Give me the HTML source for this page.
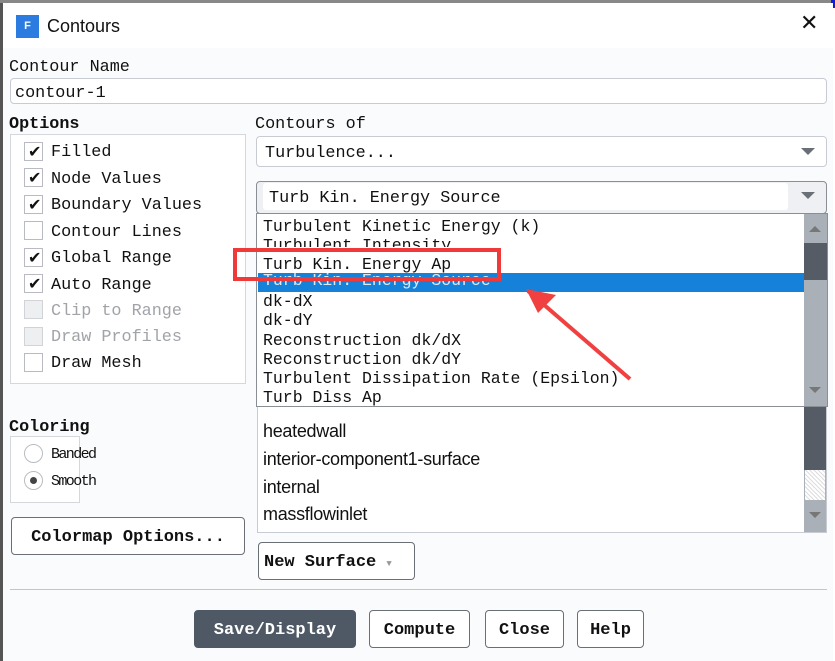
<!DOCTYPE html>
<html><head><meta charset="utf-8"><style>
*{box-sizing:border-box;margin:0;padding:0}
body{width:835px;height:661px;overflow:hidden;background:#fff;font-family:"Liberation Mono","Noto Sans CJK SC",monospace;font-size:16.8px;line-height:23px;color:#111;position:relative}
.a{position:absolute;white-space:pre}
.b{font-weight:bold}
.box{position:absolute;border:1px solid #c8ccd2;border-radius:4px;background:#fff}
.cb{position:absolute;left:24px;width:19px;height:19px;border:1px solid #b8bcc2;background:#fff;line-height:19px}
.cb.d{background:#eeeff1;border-color:#d0d3d8}
.ck{position:absolute;left:3px;top:-1px;font-size:16px;font-family:"DejaVu Sans",sans-serif;font-weight:bold}
.lbl{position:absolute;left:51px}
.g{color:#a0a3a8}
.btn{position:absolute;border:1px solid #6a6e75;border-radius:4px;background:#fff;text-align:center;font-weight:bold;font-size:17px}
.li{position:absolute;left:263px;font-size:16.5px;line-height:19px}
.sf{position:absolute;left:263px;font-family:"Liberation Sans",sans-serif;font-size:18px;letter-spacing:-0.3px}
</style></head><body>
<div class="a" style="left:0;top:0;width:3px;height:661px;background:#555"></div>
<div class="a" style="left:0;top:0;width:835px;height:3px;background:#888"></div>
<div class="a" style="left:831px;top:0;width:4px;height:8px;background:#1020d0"></div>
<div class="a" style="left:3px;top:3px;width:830px;height:45px;background:#fff"></div>
<div class="a" style="left:3px;top:48px;width:830px;height:613px;background:#fafbfc"></div>
<div class="a" style="left:16px;top:15px;width:23px;height:23px;background:#2b7be0;color:#fff;font:bold 11px 'Liberation Sans',sans-serif;text-align:center;line-height:23px">F</div>
<div class="a" style="left:47px;top:15px;font-family:'Liberation Sans',sans-serif;font-size:18px">Contours</div>
<div class="a" style="left:800px;top:12px;font-family:'DejaVu Sans',sans-serif;font-size:22px;font-weight:300">✕</div>

<div class="a" style="left:9px;top:56px">Contour Name</div>
<div class="box" style="left:10px;top:78px;width:817px;height:26px"></div>
<div class="a" style="left:15px;top:82px">contour-1</div>

<div class="a b" style="left:9px;top:113px">Options</div>
<div class="box" style="left:10px;top:134px;width:236px;height:250px;border-radius:0;border-color:#d4d8dd"></div>
<div class="cb" style="top:142px"><span class="ck">✔</span></div><div class="a lbl" style="top:141px">Filled</div>
<div class="cb" style="top:168px"><span class="ck">✔</span></div><div class="a lbl" style="top:168px">Node Values</div>
<div class="cb" style="top:195px"><span class="ck">✔</span></div><div class="a lbl" style="top:194px">Boundary Values</div>
<div class="cb" style="top:221px"></div><div class="a lbl" style="top:221px">Contour Lines</div>
<div class="cb" style="top:248px"><span class="ck">✔</span></div><div class="a lbl" style="top:247px">Global Range</div>
<div class="cb" style="top:274px"><span class="ck">✔</span></div><div class="a lbl" style="top:274px">Auto Range</div>
<div class="cb d" style="top:300px"></div><div class="a lbl g" style="top:300px">Clip to Range</div>
<div class="cb d" style="top:327px"></div><div class="a lbl g" style="top:326px">Draw Profiles</div>
<div class="cb" style="top:353px"></div><div class="a lbl" style="top:352px">Draw Mesh</div>

<div class="a b" style="left:9px;top:416px">Coloring</div>
<div class="box" style="left:10px;top:436px;width:70px;height:67px;border-radius:0;border-color:#d4d8dd"></div>
<div class="a" style="left:24px;top:444px;width:19px;height:19px;border:1px solid #b8bcc2;border-radius:50%;background:#fff"></div>
<div class="a" style="left:51px;top:443px;font-size:15px;letter-spacing:-1.6px">Banded</div>
<div class="a" style="left:24px;top:471px;width:19px;height:19px;border:1px solid #b8bcc2;border-radius:50%;background:#fff"></div>
<div class="a" style="left:30px;top:477px;width:7px;height:7px;border-radius:50%;background:#444"></div>
<div class="a" style="left:51px;top:470px;font-size:15px;letter-spacing:-1.6px">Smooth</div>
<div class="btn" style="left:11px;top:517px;width:234px;height:38px;line-height:40px">Colormap Options...</div>

<div class="a" style="left:255px;top:113px">Contours of</div>
<div class="box" style="left:256px;top:136px;width:571px;height:31px"></div>
<div class="a" style="left:265px;top:142px">Turbulence...</div>
<div class="a" style="left:801px;top:148px;border-left:7px solid transparent;border-right:7px solid transparent;border-top:7px solid #6a6e75"></div>
<div class="box" style="left:256px;top:181px;width:571px;height:33px;border-color:#8a8f96;background:#eef0f3"></div>
<div class="a" style="left:263px;top:183px;width:525px;height:27px;background:#fff;border-radius:3px"></div>
<div class="a" style="left:269px;top:187px">Turb Kin. Energy Source</div>
<div class="a" style="left:801px;top:192px;border-left:7px solid transparent;border-right:7px solid transparent;border-top:7px solid #6a6e75"></div>

<div class="box" style="left:257px;top:405px;width:570px;height:128px;border-radius:0"></div>
<div class="a" style="left:804px;top:405px;width:22px;height:127px;background:#a9b0b7"></div>
<div class="a" style="left:804px;top:405px;width:22px;height:65px;background:#555c66"></div>
<div class="a" style="left:805px;top:470px;width:20px;height:30px;background:repeating-linear-gradient(45deg,#ddd 0 1px,#fff 1px 3px)"></div>
<div class="a" style="left:809px;top:512px;border-left:6px solid transparent;border-right:6px solid transparent;border-top:6px solid #777"></div>
<div class="sf" style="top:420px">heatedwall</div>
<div class="sf" style="top:448px">interior-component1-surface</div>
<div class="sf" style="top:476px">internal</div>
<div class="sf" style="top:503px">massflowinlet</div>

<div class="a" style="left:256px;top:213px;width:572px;height:194px;background:#fff;border:1px solid #8a8f96"></div>
<div class="a" style="left:258px;top:273px;width:546px;height:19px;background:#1681d8"></div>
<div class="a" style="left:804px;top:214px;width:23px;height:192px;background:#a9b0b7"></div>
<div class="a" style="left:804px;top:243px;width:23px;height:37px;background:#555c66"></div>
<div class="a" style="left:809px;top:226px;border-left:6px solid transparent;border-right:6px solid transparent;border-bottom:6px solid #777"></div>
<div class="a" style="left:809px;top:387px;border-left:6px solid transparent;border-right:6px solid transparent;border-top:6px solid #777"></div>
<div class="li a" style="top:217px">Turbulent Kinetic Energy (k)</div>
<div class="li a" style="top:236px;height:11px;overflow:hidden">Turbulent Intensity</div>
<div class="li a" style="top:255px">Turb Kin. Energy Ap</div>
<div class="li a" style="top:273px;color:#dbe8f6;height:19px;overflow:hidden;line-height:16px">Turb Kin. Energy Source</div>
<div class="li a" style="top:292px">dk-dX</div>
<div class="li a" style="top:311px">dk-dY</div>
<div class="li a" style="top:331px">Reconstruction dk/dX</div>
<div class="li a" style="top:350px">Reconstruction dk/dY</div>
<div class="li a" style="top:369px">Turbulent Dissipation Rate (Epsilon)</div>
<div class="li a" style="top:388px">Turb Diss Ap</div>
<div class="a" style="left:233px;top:248px;width:268px;height:33px;border:4px solid #f03a3a"></div>
<svg class="a" style="left:520px;top:285px" width="115" height="100"><path d="M8 6 L110 94" stroke="#f04040" stroke-width="4"/><path d="M6 4 L36 10 L18 28 Z" fill="#f04040"/></svg>

<div class="btn" style="left:258px;top:542px;width:157px;height:38px;line-height:40px;text-align:left;padding-left:5px">New Surface <span style="font-size:9px;color:#999">▼</span></div>
<div class="a" style="left:10px;top:589px;width:817px;height:1px;background:#c2c6cb"></div>
<div class="btn" style="left:194px;top:610px;width:162px;height:38px;line-height:40px;background:#4f5966;color:#fff;border-color:#4f5966">Save/Display</div>
<div class="btn" style="left:369px;top:610px;width:101px;height:38px;line-height:40px">Compute</div>
<div class="btn" style="left:485px;top:610px;width:79px;height:38px;line-height:40px">Close</div>
<div class="btn" style="left:577px;top:610px;width:67px;height:38px;line-height:40px">Help</div>
</body></html>
